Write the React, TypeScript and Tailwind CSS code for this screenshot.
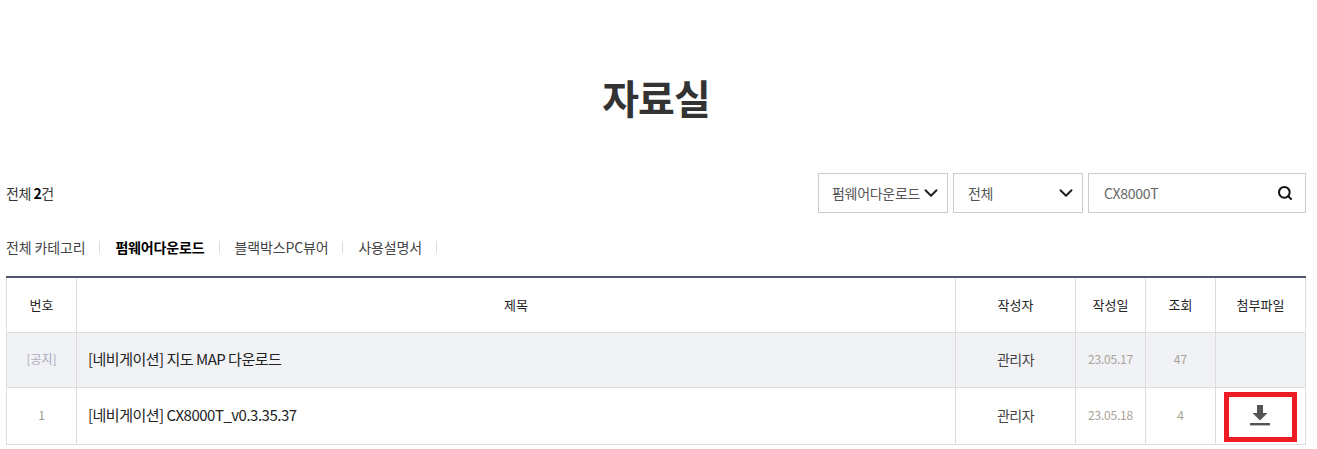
import { ChevronDown, Search } from 'lucide-react'

const FONT = "font-['Noto_Sans_CJK_KR','Noto_Sans',sans-serif]"

const categories = [
  { label: '전체 카테고리' },
  { label: '펌웨어다운로드', active: true },
  { label: '블랙박스PC뷰어' },
  { label: '사용설명서' },
]

const rows = [
  { no: '[공지]', title: '[네비게이션] 지도 MAP 다운로드', author: '관리자', date: '23.05.17', views: '47', notice: true },
  { no: '1', title: '[네비게이션] CX8000T_v0.3.35.37', author: '관리자', date: '23.05.18', views: '4', notice: false },
]

function DownloadIcon() {
  return (
    <svg width="20" height="21" viewBox="0 0 20 21" className="text-[#555]" fill="currentColor">
      <path d="M7 0h6v8h4.5L10 15.5 2.5 8H7z" />
      <rect x="0" y="18" width="20" height="2.4" />
    </svg>
  )
}

export default function App() {
  return (
    <div className={`${FONT} w-[1317px] h-[449px] overflow-hidden bg-white text-[#333] px-[6px]`}>
      <div className="w-[1300px]">
        <h1 className="pt-[67px] h-[173px] text-center text-[40px] leading-[60px] font-bold tracking-[-1px] text-[#333]">자료실</h1>

        <div className="flex items-center justify-between h-[40px]">
          <p className="text-[14px] tracking-[-0.5px] text-[#333]">
            전체 <strong className="font-bold text-black">2</strong>건
          </p>
          <div className="flex gap-[5px] text-[14px] tracking-[-0.3px] text-[#555]">
            <div className="w-[130px] h-[40px] border border-[#ccc] flex items-center pl-[13px] pr-[5px] justify-between whitespace-nowrap">
              <span>펌웨어다운로드</span>
              <ChevronDown size={22} strokeWidth={2.2} className="text-[#222] shrink-0" />
            </div>
            <div className="w-[130px] h-[40px] border border-[#ccc] flex items-center pl-[14px] pr-[5px] justify-between">
              <span>전체</span>
              <ChevronDown size={22} strokeWidth={2.2} className="text-[#222] shrink-0" />
            </div>
            <div className="w-[218px] h-[40px] border border-[#ccc] flex items-center pl-[15px] pr-[12px] justify-between">
              <span className="text-[#666]">CX8000T</span>
              <Search size={16} strokeWidth={3} className="text-[#111]" />
            </div>
          </div>
        </div>

        <ul className="flex items-center h-[63px] pt-[5px] text-[14px] tracking-[-0.15px] text-[#444]">
          {categories.map((c) => (
            <li key={c.label} className="flex items-center">
              <span className={c.active ? 'font-bold text-black' : ''}>{c.label}</span>
              <span className="w-px h-[12px] bg-[#ddd] ml-[14px] mr-[15px]" />
            </li>
          ))}
        </ul>

        <table className="w-[1300px] table-fixed border-collapse border-t-2 border-t-[#50566b] text-[13px]">
          <thead>
            <tr className="h-[55px] text-[#222]">
              <th className="w-[70px] border border-[#ddd] border-t-0 font-normal">번호</th>
              <th className="w-[879px] border border-[#ddd] border-t-0 font-normal">제목</th>
              <th className="w-[120px] border border-[#ddd] border-t-0 font-normal">작성자</th>
              <th className="w-[70px] border border-[#ddd] border-t-0 font-normal">작성일</th>
              <th className="w-[70px] border border-[#ddd] border-t-0 font-normal">조회</th>
              <th className="w-[90px] border border-[#ddd] border-t-0 font-normal">첨부파일</th>
            </tr>
          </thead>
          <tbody>
            {rows.map((r) => (
              <tr key={r.no} className={r.notice ? 'h-[55px] bg-[#f1f2f6]' : 'h-[57px] bg-white'}>
                <td className={`border border-[#ddd] pb-px text-center text-[12px] ${r.notice ? 'text-[#aab]' : 'text-[#a09a90]'}`}>{r.no}</td>
                <td className="border border-[#ddd] pb-px pl-[11px] text-[15px] tracking-[-0.5px] text-[#222]">{r.title}</td>
                <td className="border border-[#ddd] pb-px text-center text-[14px] tracking-[-0.5px] text-[#444]">{r.author}</td>
                <td className="border border-[#ddd] pb-px text-center text-[12px] tracking-[-0.2px] text-[#a8a296]">{r.date}</td>
                <td className="border border-[#ddd] pb-px text-center text-[12px] text-[#a8a296]">{r.views}</td>
                <td className="border border-[#ddd] p-0 pt-[3px]">
                  {!r.notice && (
                    <div className="mx-auto w-[73px] h-[50px] border-[5px] border-[#ed1c24] pb-[4px] pr-[1px] flex items-center justify-center">
                      <DownloadIcon />
                    </div>
                  )}
                </td>
              </tr>
            ))}
          </tbody>
        </table>
      </div>
    </div>
  )
}
